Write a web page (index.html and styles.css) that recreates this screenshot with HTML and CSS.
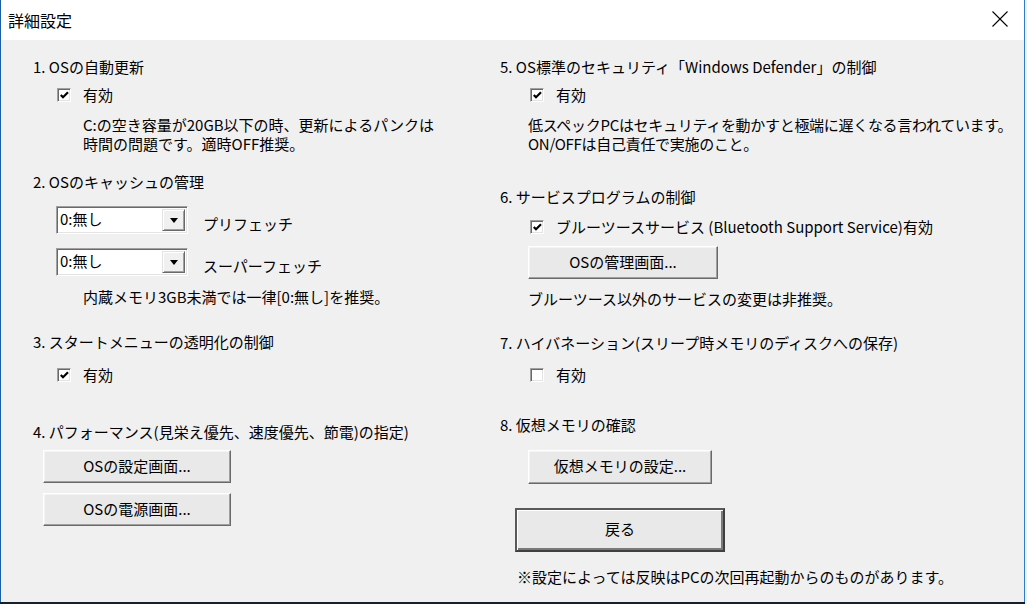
FILE: index.html
```html
<!DOCTYPE html>
<html lang="ja">
<head>
<meta charset="utf-8">
<title>詳細設定</title>
<link rel="stylesheet" href="styles.css">
</head>
<body>
<div class="window">
  <div class="titlebar">
    <span class="title">詳細設定</span>
    <svg class="close" width="16" height="16" viewBox="0 0 16 16"><path d="M0.5 0.5 L15.5 15.5 M15.5 0.5 L0.5 15.5" stroke="#000" stroke-width="1.1" fill="none"/></svg>
  </div>
  <div class="content">
    <div class="col col-left">
      <div class="heading">1. OSの自動更新</div>
      <div class="check-row m8 ind-l"><span class="cb"><svg class="mark" width="11" height="11" viewBox="0 0 11 11"><path d="M1.8 5 L4 7.3 L9 2.3" stroke="#000" stroke-width="2.2" fill="none"/></svg></span><span class="cb-label">有効</span></div>
      <div class="desc m10 pl50">C:の空き容量が20GB以下の時、更新によるパンクは<br>時間の問題です。適時OFF推奨。</div>

      <div class="heading m19">2. OSのキャッシュの管理</div>
      <div class="combo-row m14">
        <div class="combo"><span class="combo-text">0:無し</span><span class="combo-btn"><span class="tri"></span></span></div>
        <span class="combo-label">プリフェッチ</span>
      </div>
      <div class="combo-row m14">
        <div class="combo"><span class="combo-text">0:無し</span><span class="combo-btn"><span class="tri"></span></span></div>
        <span class="combo-label">スーパーフェッチ</span>
      </div>
      <div class="note m11 pl50">内蔵メモリ3GB未満では一律[0:無し]を推奨。</div>

      <div class="heading m25">3. スタートメニューの透明化の制御</div>
      <div class="check-row m13 ind-l"><span class="cb"><svg class="mark" width="11" height="11" viewBox="0 0 11 11"><path d="M1.8 5 L4 7.3 L9 2.3" stroke="#000" stroke-width="2.2" fill="none"/></svg></span><span class="cb-label">有効</span></div>

      <div class="heading m37">4. パフォーマンス(見栄え優先、速度優先、節電)の指定)</div>
      <div class="btn btn-l m8">OSの設定画面...</div>
      <div class="btn btn-l m10">OSの電源画面...</div>
    </div>

    <div class="col col-right">
      <div class="heading">5. OS標準のセキュリティ「Windows Defender」の制御</div>
      <div class="check-row m8 ind-r"><span class="cb"><svg class="mark" width="11" height="11" viewBox="0 0 11 11"><path d="M1.8 5 L4 7.3 L9 2.3" stroke="#000" stroke-width="2.2" fill="none"/></svg></span><span class="cb-label">有効</span></div>
      <div class="desc m10 pl28 tight">低スペックPCはセキュリティを動かすと極端に遅くなる言われています。<br>ON/OFFは自己責任で実施のこと。</div>

      <div class="heading m34">6. サービスプログラムの制御</div>
      <div class="check-row m10 ind-r"><span class="cb"><svg class="mark" width="11" height="11" viewBox="0 0 11 11"><path d="M1.8 5 L4 7.3 L9 2.3" stroke="#000" stroke-width="2.2" fill="none"/></svg></span><span class="cb-label">ブルーツースサービス (Bluetooth Support Service)有効</span></div>
      <div class="btn btn-r1 m9">OSの管理画面...</div>
      <div class="note m10 pl28">ブルーツース以外のサービスの変更は非推奨。</div>

      <div class="heading m24">7. ハイバネーション(スリープ時メモリのディスクへの保存)</div>
      <div class="check-row m12 ind-r"><span class="cb"></span><span class="cb-label">有効</span></div>

      <div class="heading m30">8. 仮想メモリの確認</div>
      <div class="btn btn-r2 m15">仮想メモリの設定...</div>
      <div class="btn btn-default m24">戻る</div>
      <div class="note m15 pl17">※設定によっては反映はPCの次回再起動からのものがあります。</div>
    </div>
  </div>
  <div class="taskbar"></div>
</div>
</body>
</html>
```

FILE: styles.css
```css
html, body {
  margin: 0;
  padding: 0;
  background: #f0f0f0;
}
body {
  width: 1027px;
  height: 604px;
  overflow: hidden;
  font-family: "Noto Sans CJK JP", "Noto Sans", sans-serif;
  font-size: 15px;
  color: #000;
}
.window {
  width: 1023px;
  height: 604px;
  border-left: 1px solid #1b5fa5;
  border-right: 1px solid #2a7bc8;
  background: #f0f0f0;
  display: flex;
  flex-direction: column;
}
.titlebar {
  height: 40px;
  flex: none;
  background: #fff;
  display: flex;
  align-items: center;
  justify-content: space-between;
  padding: 0 16px 0 7px;
}
.title {
  font-size: 16px;
  line-height: 20px;
  margin-top: -1px;
}
.close {
  display: block;
  margin-top: -3px;
}
.content {
  flex: 1;
  display: grid;
  grid-template-columns: 467px 1fr;
  padding: 17px 0 0 32px;
}
.heading, .note, .check-row {
  line-height: 20px;
  white-space: nowrap;
}
.desc {
  line-height: 19px;
  white-space: nowrap;
}
.tight { letter-spacing: -0.3px; }
.m8 { margin-top: 8px; }
.m9 { margin-top: 9px; }
.m10 { margin-top: 10px; }
.m11 { margin-top: 11px; }
.m12 { margin-top: 12px; }
.m13 { margin-top: 13px; }
.m14 { margin-top: 14px; }
.m15 { margin-top: 15px; }
.m19 { margin-top: 19px; }
.m24 { margin-top: 24px; }
.m25 { margin-top: 25px; }
.m30 { margin-top: 30px; }
.m34 { margin-top: 34px; }
.m37 { margin-top: 37px; }
.pl50 { padding-left: 50px; }
.pl28 { padding-left: 28px; }
.pl17 { padding-left: 17px; }

.check-row {
  display: flex;
  align-items: center;
  height: 20px;
}
.ind-l { padding-left: 24px; }
.ind-r { padding-left: 30px; }
.cb {
  width: 14px;
  height: 14px;
  box-sizing: border-box;
  background: #fff;
  border: 1px solid;
  border-color: #a0a0a0 #fff #fff #a0a0a0;
  box-shadow: inset 1px 1px 0 #696969, inset -1px -1px 0 #e3e3e3;
  flex: none;
  display: flex;
  align-items: center;
  justify-content: center;
}
.mark {
  display: block;
  margin: 1px 0 0 1px;
}
.cb-label {
  margin-left: 12px;
}

.combo-row {
  display: flex;
  align-items: flex-start;
  padding-left: 23px;
}
.combo {
  width: 132px;
  height: 28px;
  box-sizing: border-box;
  background: #fff;
  border: 1px solid;
  border-color: #a0a0a0 #fff #fff #a0a0a0;
  box-shadow: inset 1px 1px 0 #696969, inset -1px -1px 0 #e3e3e3;
  display: flex;
  align-items: center;
  justify-content: space-between;
  padding: 2px;
}
.combo-text {
  line-height: 20px;
  margin-left: 1px;
  margin-top: -3px;
}
.combo-btn {
  width: 23px;
  height: 22px;
  box-sizing: border-box;
  background: #f0f0f0;
  border: 1px solid;
  border-color: #e3e3e3 #696969 #696969 #e3e3e3;
  box-shadow: inset 1px 1px 0 #fff, inset -1px -1px 0 #a0a0a0;
  display: flex;
  align-items: center;
  justify-content: center;
}
.tri {
  width: 0;
  height: 0;
  border-left: 4.5px solid transparent;
  border-right: 4.5px solid transparent;
  border-top: 5px solid #000;
  margin-top: 1px;
}
.combo-label {
  margin-left: 15px;
  margin-top: 8px;
  line-height: 20px;
}

.btn {
  height: 33px;
  box-sizing: border-box;
  background: #e9e9e9;
  border: 1px solid;
  border-color: #fff #696969 #696969 #fff;
  box-shadow: inset -1px -1px 0 #a0a0a0, inset 1px 1px 0 #f4f4f4;
  display: flex;
  align-items: center;
  justify-content: center;
  line-height: 20px;
  padding-bottom: 2px;
}
.btn-l { width: 188px; margin-left: 10px; }
.btn-r1 { width: 190px; margin-left: 28px; }
.btn-r2 { width: 184px; height: 34px; margin-left: 28px; }
.btn-default {
  width: 210px;
  height: 44px;
  margin-left: 15px;
  border: 2px solid;
  border-color: #5a5a5a #404040 #404040 #5a5a5a;
  box-shadow: inset 1px 1px 0 #fff, inset -2px -2px 0 #7a7a7a;
}

.taskbar {
  height: 2px;
  flex: none;
  background: #14202c;
  margin-left: -1px;
  margin-right: -1px;
}
```
